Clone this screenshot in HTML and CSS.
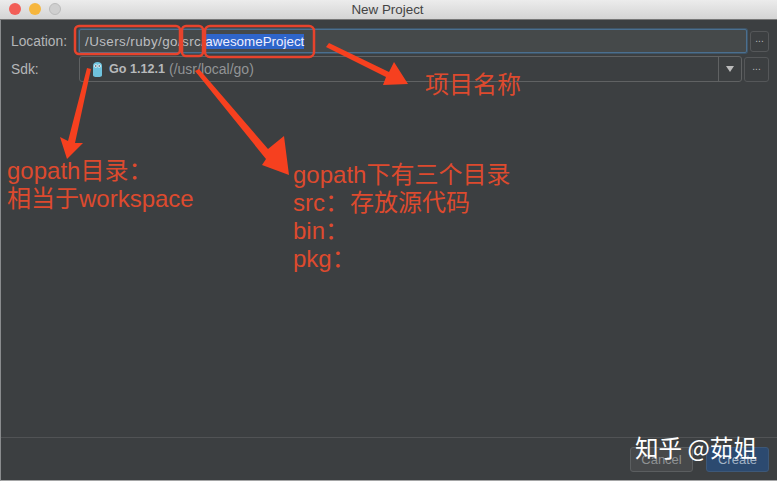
FILE: index.html
```html
<!DOCTYPE html>
<html lang="zh">
<head>
<meta charset="utf-8">
<title>New Project</title>
<link rel="stylesheet" href="styles.css">
</head>
<body>
<div class="window">
  <header class="titlebar">
    <div class="lights"><i class="light red"></i><i class="light yellow"></i><i class="light grey"></i></div>
    <span class="title">New Project</span>
  </header>
  <main class="form">
    <div class="row loc-row">
      <label class="label">Location:</label>
      <div class="field loc-field"><span class="path">/Users/ruby/go/src/</span><span class="sel">awesomeProject</span></div>
      <button class="dots">...</button>
    </div>
    <div class="row sdk-row">
      <label class="label">Sdk:</label>
      <div class="field sdk-field">
        <div class="sdk-value">
          <svg class="gopher" width="11" height="15" viewBox="0 0 11 15"><path d="M1 4C1 1 3 0 5.5 0S10 1 10 4V13C10 14.5 9 15 5.5 15S1 14.5 1 13Z" fill="#6fc3de"/><circle cx="3.8" cy="4" r="1.7" fill="#e8f4f8"/><circle cx="7.2" cy="4" r="1.7" fill="#e8f4f8"/><circle cx="3.8" cy="4" r=".7" fill="#223"/><circle cx="7.2" cy="4" r=".7" fill="#223"/></svg>
          <b class="sdk-name">Go 1.12.1</b> <span class="sdk-path">(/usr/local/go)</span>
        </div>
        <div class="combo"><i class="tri"></i></div>
      </div>
      <button class="dots">...</button>
    </div>
  </main>
  <footer class="footer">
    <button class="btn">Cancel</button>
    <button class="btn primary">Create</button>
  </footer>
</div>

<svg class="marks" width="777" height="481" viewBox="0 0 777 481">
  <g fill="none" stroke="#e8432c" stroke-width="2.5">
    <rect x="75" y="26" width="105" height="28" rx="4"/>
    <rect x="182" y="26" width="21" height="30" rx="4"/>
    <rect x="205" y="26" width="109" height="31" rx="5"/>
  </g>
  <g fill="#f6401f">
    <polygon points="87,68 91,69 75,143 83,143 67,159 60,137 68,141"/>
    <polygon points="195,71 199,69 268,149 284,136 289,175 262,165 266,159"/>
    <polygon points="326,47 329,43 389,72 394,62 408,84 383,85 386,77"/>
  </g>
</svg>
<div class="note n-name">项目名称</div>
<div class="note n-gopath">gopath目录：<br>相当于workspace</div>
<div class="note n-dirs">gopath下有三个目录<br>src：<span class="gap">存放源代码</span><br>bin：<br>pkg：</div>
<div class="watermark">知乎 @茹姐</div>
</body>
</html>
```
FILE: styles.css
```css
html, body { margin: 0; padding: 0; }
body { width: 777px; height: 481px; overflow: hidden; background: #3c3f41; position: relative; font-family: "Liberation Sans", "Noto Sans CJK SC", sans-serif; }
.window { width: 777px; height: 481px; display: flex; flex-direction: column; border-left: 1px solid #8a8c8e; border-bottom: 1px solid #a4a5a6; box-sizing: border-box; }
.titlebar { height: 20px; flex: none; display: flex; align-items: center; justify-content: center; position: relative; background: linear-gradient(#ececec, #d4d4d4); border-bottom: 1px solid #777; box-sizing: border-box; margin-left: -1px; }
.title { font-size: 13.4px; color: #444; margin-right: 2px; }
.lights { position: absolute; left: 9px; top: 3px; display: flex; gap: 8px; }
.light { width: 12px; height: 12px; border-radius: 50%; display: block; }
.red { background: #f25e57; }
.yellow { background: #f6b63d; }
.grey { background: #cfcfcf; border: 1px solid #bbb; box-sizing: border-box; }
.form { flex: 1; display: flex; flex-direction: column; gap: 3px; padding: 9px 8px 0 10px; }
.row { display: flex; align-items: center; }
.label { width: 67px; flex: none; font-size: 13.8px; color: #b4b6b8; }
.loc-row { height: 24px; }
.sdk-row { height: 26px; }
.field { box-sizing: border-box; display: flex; align-items: center; font-size: 13.4px; color: #bcbec0; }
.loc-field { width: 668px; height: 24px; flex: none; margin-left: 1px; background: #45494a; border: 1px solid #4b6f8f; box-shadow: 0 0 0 1px #3e5568; border-radius: 2px; padding-left: 5px; }
.path { letter-spacing: .42px; }
.sel { background: #2f65ca; color: #eef; height: 15px; line-height: 15px; }
.sdk-field { width: 663px; height: 26px; flex: none; margin-left: 1px; border: 1px solid #606263; border-radius: 3px; }
.sdk-value { flex: 1; display: flex; align-items: center; gap: 4px; padding-left: 12px; white-space: pre; }
.gopher { margin-right: 2px; }
.sdk-name { font-weight: 600; font-size: 12.6px; color: #b7b9bb; }
.sdk-path { color: #929496; font-size: 14px; }
.combo { width: 22px; height: 100%; border-left: 1px solid #606263; display: flex; align-items: center; justify-content: center; }
.tri { width: 0; height: 0; border: 4px solid transparent; border-top: 6px solid #bbb; border-bottom: 0; }
.dots { box-sizing: border-box; background: transparent; border: 1px solid #555759; border-radius: 3px; color: #bbb; font-size: 10px; padding: 0 0 5px; font-family: inherit; }
.loc-row .dots { width: 21px; height: 21px; margin-left: 3px; }
.sdk-row .dots { width: 25px; height: 25px; margin-left: 2px; }
.footer { height: 43px; flex: none; box-sizing: border-box; border-top: 1px solid #515355; display: flex; justify-content: flex-end; align-items: flex-start; gap: 13px; padding: 9px 8px 0 0; }
.btn { box-sizing: border-box; height: 25px; width: 63px; border: 1px solid #5b5e60; background: #47494b; border-radius: 3px; color: #8f9294; font-size: 13px; font-family: inherit; padding: 0; }
.primary { background: #2c4a70; border-color: #3d5878; color: #a3b4c6; }
.marks { position: absolute; left: 0; top: 0; }
.note { position: absolute; color: #dd4a2e; font-size: 24px; line-height: 28px; white-space: nowrap; font-family: "Liberation Sans", "Noto Sans CJK SC", sans-serif; }
.gap { margin-left: 1px; }
.n-name { left: 425px; top: 71px; }
.n-gopath { left: 7px; top: 157px; }
.n-dirs { left: 293px; top: 161px; }
.watermark { position: absolute; left: 635px; top: 431px; color: #fff; font-size: 23.6px; line-height: 32px; white-space: nowrap; font-family: "Noto Sans CJK SC", sans-serif; }
```
